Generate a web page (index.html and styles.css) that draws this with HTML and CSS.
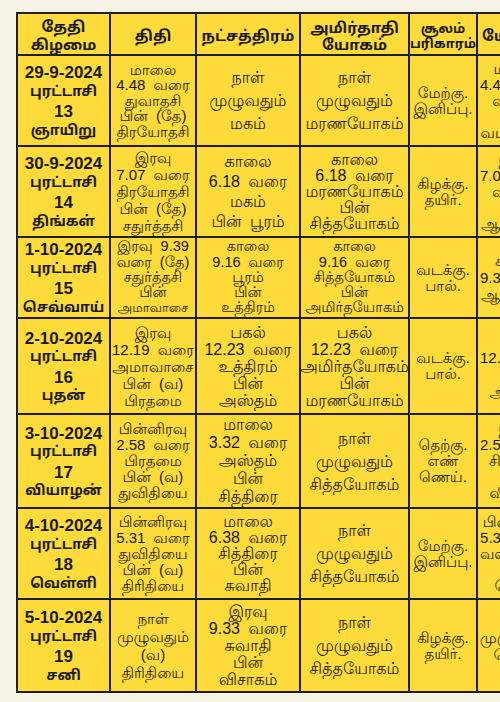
FILE: index.html
```html
<!DOCTYPE html>
<html lang="ta">
<head>
<meta charset="utf-8">
<title>பஞ்சாங்கம்</title>
<link rel="stylesheet" href="styles.css">
</head>
<body>
<div class="sheet">
  <div class="cell head lh18">தேதி<br>கிழமை</div>
  <div class="cell head">திதி</div>
  <div class="cell head">நட்சத்திரம்</div>
  <div class="cell head lh17">அமிர்தாதி<br>யோகம்</div>
  <div class="cell head lh15 small">சூலம்<br>பரிகாரம்</div>
  <div class="cell head start">யோகம்</div>

  <div class="cell date"><span class="dn">29-9-2024</span><span class="tw">புரட்டாசி</span><span class="dn">13</span><span class="tw">ஞாயிறு</span></div>
  <div class="cell tithi">மாலை<br>4.48 வரை<br>துவாதசி<br>பின் (தே)<br>திரயோதசி</div>
  <div class="cell big lh23">நாள்<br>முழுவதும்<br>மகம்</div>
  <div class="cell big lh23">நாள்<br>முழுவதும்<br>மரணயோகம்</div>
  <div class="cell soolam">மேற்கு.<br>இனிப்பு.</div>
  <div class="cell last lh16">மாலை<br>4.48 வரை<br>வடக்கு<br>பின்<br>வடமேற்கு</div>

  <div class="cell date"><span class="dn">30-9-2024</span><span class="tw">புரட்டாசி</span><span class="dn">14</span><span class="tw">திங்கள்</span></div>
  <div class="cell tithi lh17">இரவு<br>7.07 வரை<br>திரயோதசி<br>பின் (தே)<br>சதுர்த்தசி</div>
  <div class="cell big lh20">காலை<br>6.18 வரை<br>மகம்<br>பின் பூரம்</div>
  <div class="cell big lh16">காலை<br>6.18 வரை<br>மரணயோகம்<br>பின்<br>சித்தயோகம்</div>
  <div class="cell soolam">கிழக்கு.<br>தயிர்.</div>
  <div class="cell last lh16">இரவு<br>7.07 வரை<br>வடக்கு<br>பின்<br>ஆயில்யம்</div>

  <div class="cell date"><span class="dn">1-10-2024</span><span class="tw">புரட்டாசி</span><span class="dn">15</span><span class="tw">செவ்வாய்</span></div>
  <div class="cell tithi tight">இரவு 9.39<br>வரை (தே)<br>சதுர்த்தசி<br>பின்<br><span class="tiny">அமாவாசை</span></div>
  <div class="cell tight">காலை<br>9.16 வரை<br>பூரம்<br>பின்<br>உத்திரம்</div>
  <div class="cell tight">காலை<br>9.16 வரை<br>சித்தயோகம்<br>பின்<br>அமிர்தயோகம்</div>
  <div class="cell soolam">வடக்கு.<br>பால்.</div>
  <div class="cell last lh17">சதயம்<br>9.39 வரை<br>ஆயில்யம்</div>

  <div class="cell date"><span class="dn">2-10-2024</span><span class="tw">புரட்டாசி</span><span class="dn">16</span><span class="tw">புதன்</span></div>
  <div class="cell tithi lh17">இரவு<br>12.19 வரை<br>அமாவாசை<br>பின் (வ)<br>பிரதமை</div>
  <div class="cell big lh17">பகல்<br>12.23 வரை<br>உத்திரம்<br>பின்<br>அஸ்தம்</div>
  <div class="cell big lh17">பகல்<br>12.23 வரை<br>அமிர்தயோகம்<br>பின்<br>மரணயோகம்</div>
  <div class="cell soolam">வடக்கு.<br>பால்.</div>
  <div class="cell last lh17">இரவு<br>12.19 வரை<br>பூரம்<br>அனுஷம்</div>

  <div class="cell date"><span class="dn">3-10-2024</span><span class="tw">புரட்டாசி</span><span class="dn">17</span><span class="tw">வியாழன்</span></div>
  <div class="cell tithi lh16">பின்னிரவு<br>2.58 வரை<br>பிரதமை<br>பின் (வ)<br>துவிதியை</div>
  <div class="cell big lh18">மாலை<br>3.32 வரை<br>அஸ்தம்<br>பின்<br>சித்திரை</div>
  <div class="cell big lh23">நாள்<br>முழுவதும்<br>சித்தயோகம்</div>
  <div class="cell soolam">தெற்கு.<br>எண்<br>ணெய்.</div>
  <div class="cell last lh16">இரவு<br>2.58 வரை<br>சித்திரை<br>பின்<br>விசாகம்</div>

  <div class="cell date"><span class="dn">4-10-2024</span><span class="tw">புரட்டாசி</span><span class="dn">18</span><span class="tw">வெள்ளி</span></div>
  <div class="cell tithi lh16">பின்னிரவு<br>5.31 வரை<br>துவிதியை<br>பின் (வ)<br>திரிதியை</div>
  <div class="cell big lh16">மாலை<br>6.38 வரை<br>சித்திரை<br>பின்<br>சுவாதி</div>
  <div class="cell big lh23">நாள்<br>முழுவதும்<br>சித்தயோகம்</div>
  <div class="cell soolam">மேற்கு.<br>இனிப்பு.</div>
  <div class="cell last lh16">பின்னிரவு<br>5.31 வரை<br>வளர்பிறை<br>பின்<br>தெற்கு</div>

  <div class="cell date"><span class="dn">5-10-2024</span><span class="tw">புரட்டாசி</span><span class="dn">19</span><span class="tw">சனி</span></div>
  <div class="cell tithi lh18">நாள்<br>முழுவதும்<br>(வ)<br>திரிதியை</div>
  <div class="cell big lh17">இரவு<br>9.33 வரை<br>சுவாதி<br>பின்<br>விசாகம்</div>
  <div class="cell big lh23">நாள்<br>முழுவதும்<br>சித்தயோகம்</div>
  <div class="cell soolam">கிழக்கு.<br>தயிர்.</div>
  <div class="cell last lh17">முழுவதும்<br>தெற்கு</div>
</div>
</body>
</html>
```

FILE: styles.css
```css
html, body {
  margin: 0;
  padding: 0;
  overflow: hidden;
  background: #f7f2e6;
}
body {
  width: 500px;
  height: 702px;
  font-family: "Liberation Sans", "Lohit Tamil", "Noto Sans Tamil", sans-serif;
  color: #1b1a12;
}
.sheet {
  display: grid;
  grid-template-columns: 91px 84px 102px 107px 66px 67px;
  grid-template-rows: 40px 89px 89px 79px 94px 92px 89px 91px;
  gap: 2px;
  padding: 2px;
  background: #1f1d14;
  width: max-content;
  margin: 12px 0 0 16px;
}
.cell {
  background: #fcdb3b;
  display: flex;
  flex-direction: column;
  justify-content: center;
  align-items: center;
  text-align: center;
  font-size: 15px;
  line-height: 16px;
  word-spacing: 4px;
  white-space: nowrap;
  overflow: hidden;
}
.big { font-size: 16px; }
.head {
  font-family: "Liberation Sans", "Noto Sans Tamil", sans-serif;
  font-weight: 700;
  font-size: 15px;
  line-height: 18px;
  padding-top: 3px;
  word-spacing: 0;
}
.head.small { font-size: 13px; }
.head.start { align-items: flex-start; padding-left: 4px; }
.date {
  font-weight: 700;
  word-spacing: 0;
  padding-top: 3px;
}
.date span {
  display: block;
  height: 19.5px;
  line-height: 19.5px;
}
.dn {
  font-family: "Liberation Sans", sans-serif;
  font-size: 17px;
}
.tw {
  font-family: "Noto Sans Tamil", "Lohit Tamil", sans-serif;
  font-size: 14px;
}
.tithi { line-height: 15.5px; }
.tight { font-size: 14.5px; line-height: 15.2px; }
.soolam { line-height: 16px; word-spacing: 0; }
.last { align-items: flex-start; padding-left: 2px; }
.tiny { font-size: 13px; }
.lh15 { line-height: 15px; }
.lh16 { line-height: 16px; }
.lh17 { line-height: 17px; }
.lh18 { line-height: 18px; }
.lh20 { line-height: 20px; }
.lh23 { line-height: 23px; }
```
